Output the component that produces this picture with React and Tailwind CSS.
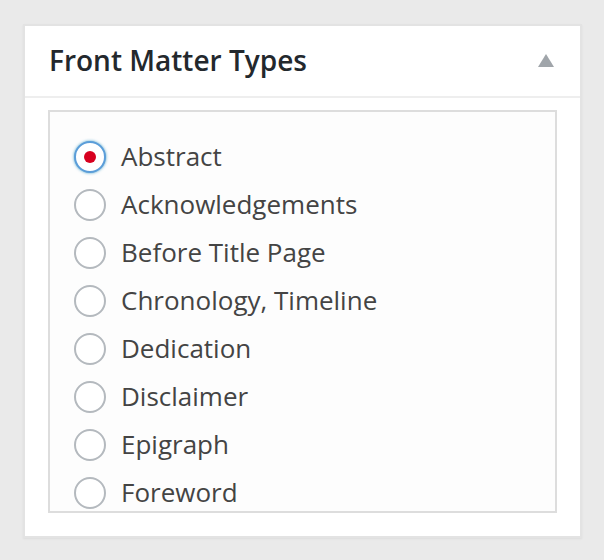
const items = [
  "Abstract",
  "Acknowledgements",
  "Before Title Page",
  "Chronology, Timeline",
  "Dedication",
  "Disclaimer",
  "Epigraph",
  "Foreword",
];

export default function App() {
  return (
    <div className="min-h-[560px] w-[604px] bg-[#eaeaea] pt-[24px] pl-[23px] font-['Open_Sans',sans-serif]">
      <div className="w-[559px] h-[514px] border-2 border-[#e3e3e3] bg-white shadow-[0_1px_2px_rgba(0,0,0,0.06)] flex flex-col">
        {/* header */}
        <div className="h-[72px] shrink-0 flex items-center justify-between pl-[24px] pr-[26px] border-b-2 border-[#eeeeee]">
          <h2 className="text-[28px] font-semibold text-[#23282d] leading-none -mt-[2px]">Front Matter Types</h2>
          <svg width="16" height="13" viewBox="0 0 16 13" className="-mt-[2px]">
            <path d="M8 0 L16 13 L0 13 Z" fill="#a0a5aa" />
          </svg>
        </div>

        {/* list box */}
        <div className="mx-[23px] mt-[12px] h-[403px] shrink-0 border-2 border-[#dddddd] bg-[#fdfdfd] overflow-hidden pt-[21px] pl-[24px]">
          {items.map((label, i) => (
            <label key={label} className="h-[48px] flex items-center gap-[15px]">
              {i === 0 ? (
                <span className="w-[32px] h-[32px] rounded-full border-2 border-[#5b9dd9] bg-white shadow-[0_0_3px_rgba(30,140,190,0.8)] flex items-center justify-center shrink-0">
                  <span className="w-[12px] h-[12px] rounded-full bg-[#d7001f]" />
                </span>
              ) : (
                <span className="w-[32px] h-[32px] rounded-full border-2 border-[#b4b9be] bg-white shrink-0" />
              )}
              <span className="text-[26px] text-[#444444] leading-none -mt-[2px]">{label}</span>
            </label>
          ))}
        </div>
      </div>
    </div>
  );
}
